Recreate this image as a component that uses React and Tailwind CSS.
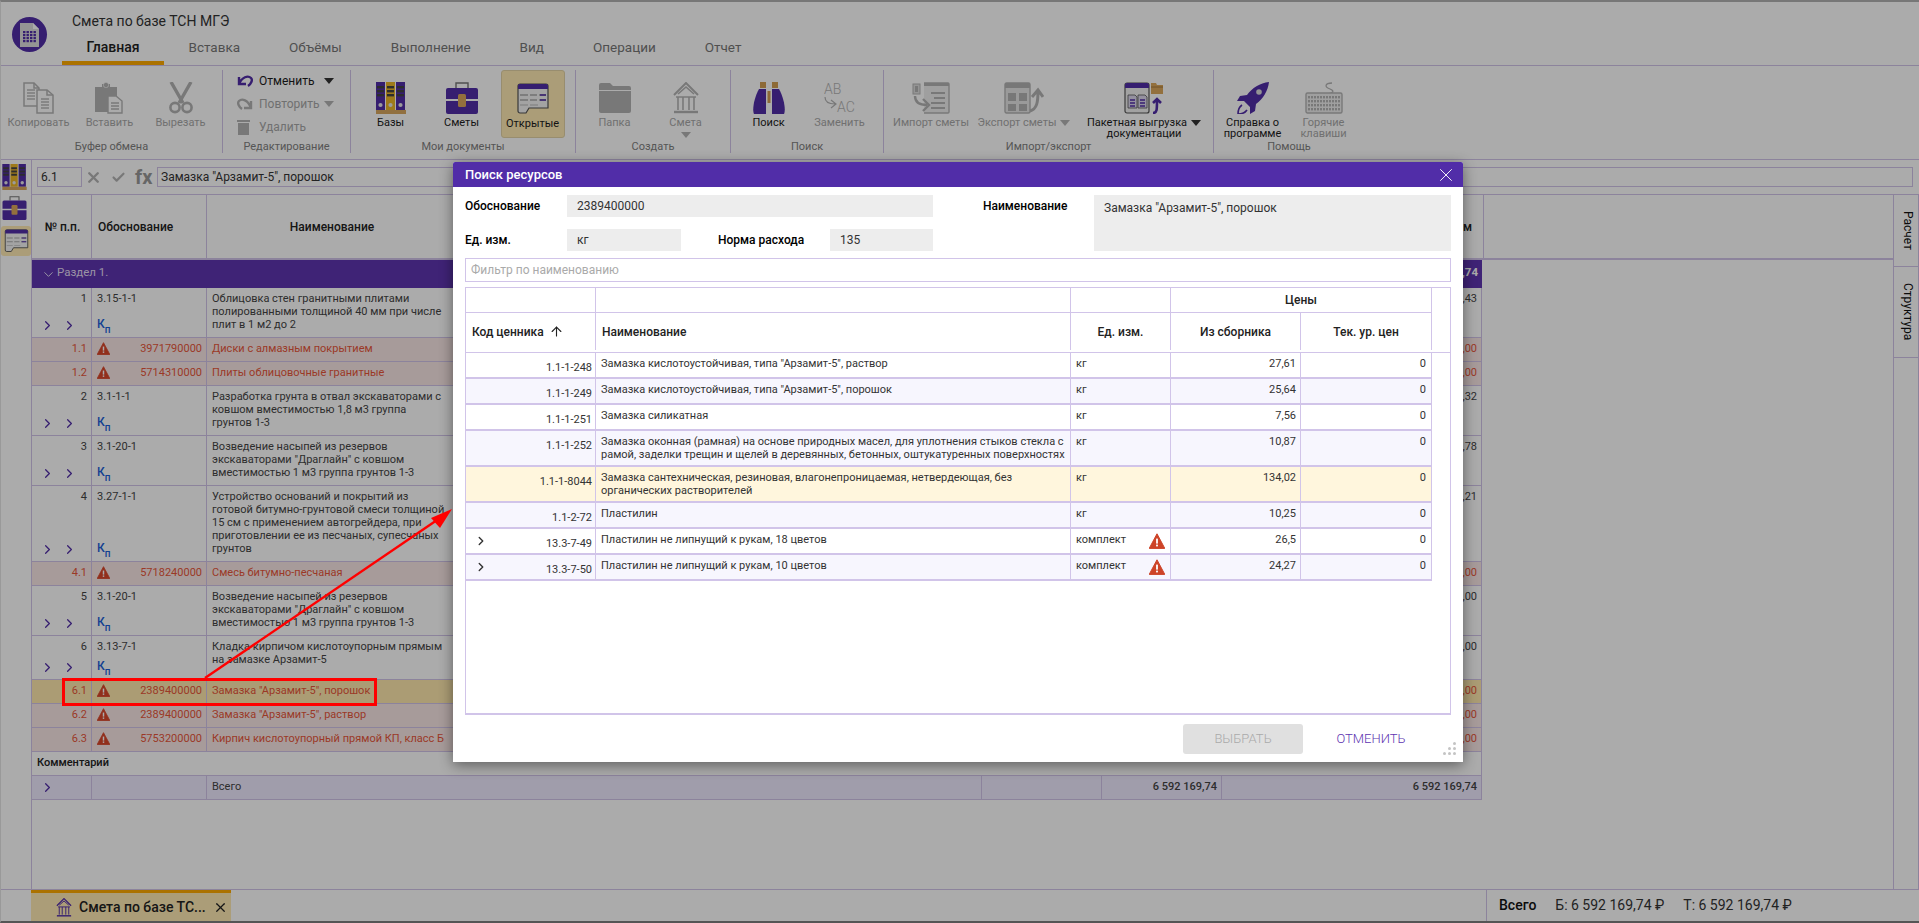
// App.jsx
import { X, Check, ChevronRight, ChevronDown, ArrowUp } from 'lucide-react';

const PURPLE = '#512da8';
const GRAY = '#b4b4b4';

function Caret({ color = '#333', className = '' }) {
  return (
    <svg width="10" height="6" viewBox="0 0 10 6" className={`shrink-0 ${className}`}>
      <path d="M0 0h10L5 6z" fill={color} />
    </svg>
  );
}

function WarnIcon({ size = 13, color = '#d9472b' }) {
  return (
    <svg width={size} height={size} viewBox="0 0 16 16" className="shrink-0">
      <path d="M8 .8 15.8 15.4H.2z" fill={color} stroke={color} strokeLinejoin="round" />
      <rect x="7.1" y="5.6" width="1.8" height="5" fill="#fff" />
      <rect x="7.1" y="11.6" width="1.8" height="1.8" fill="#fff" />
    </svg>
  );
}

function CopyIcon() {
  const lines = (x, y) => [0, 3, 6, 9].map((d) => <path key={d} d={`M${x} ${y + d}h8`} stroke={GRAY} strokeWidth="1.4" />);
  return (
    <svg width="32" height="32" viewBox="0 0 32 32" fill="none">
      <path d="M1 1h10l5 5v18H1z" fill="#fff" stroke={GRAY} strokeWidth="1.5" />
      <path d="M11 1v5h5" stroke={GRAY} strokeWidth="1.5" />
      <path d="M14 8h10l6 5v18H14z" fill="#fff" stroke={GRAY} strokeWidth="1.5" />
      <path d="M24 8v5h6" stroke={GRAY} strokeWidth="1.5" />
      {lines(4, 8)}
      {lines(18, 17)}
    </svg>
  );
}

function PasteIcon() {
  return (
    <svg width="32" height="32" viewBox="0 0 32 32" fill="none">
      <path d="M1 5h7V2h8v3h7v25H1z" fill={GRAY} />
      <rect x="9.5" y="0.5" width="5" height="5" rx="2" fill={GRAY} stroke="#fff" strokeWidth=".6" />
      <path d="M14 14h8l6 5v12H14z" fill="#fff" stroke={GRAY} strokeWidth="1.4" />
      <path d="M17 21h8M17 24h8M17 27h8" stroke={GRAY} strokeWidth="1.4" />
    </svg>
  );
}

function ScissorsIcon() {
  return (
    <svg width="32" height="32" viewBox="0 0 32 32" fill="none">
      <path d="M6 0l12 21M26 0 14 21" stroke={GRAY} strokeWidth="3.4" />
      <circle cx="10" cy="25.5" r="4.6" stroke={GRAY} strokeWidth="2.6" />
      <circle cx="22" cy="25.5" r="4.6" stroke={GRAY} strokeWidth="2.6" />
    </svg>
  );
}

function BindersIcon({ width = 30, height = 32 }) {
  const binder = (x, c) => (
    <g key={x}>
      <rect x={x} y="0" width="9" height="28" fill={c} />
      <rect x={x + 1} y="4" width="7" height="2.4" fill="#444" />
      <rect x={x + 1} y="8" width="7" height="2.4" fill="#444" />
      <rect x={x + 1} y="12" width="7" height="2.4" fill="#444" />
      <circle cx={x + 4.5} cy="23" r="2.1" fill="#e8e8e8" />
    </g>
  );
  return (
    <svg width={width} height={height} viewBox="0 0 30 32">
      {binder(0, PURPLE)}
      {binder(10, '#ecb628')}
      {binder(20, PURPLE)}
      <rect x="0" y="28" width="30" height="4" fill="#d8a860" />
    </svg>
  );
}

function CaseIcon({ width = 34, height = 32 }) {
  return (
    <svg width={width} height={height} viewBox="0 0 34 32" fill="none">
      <path d="M11 6V1h12v5" stroke="#777" strokeWidth="1.4" />
      <path d="M1 8a2 2 0 0 1 2-2h28a2 2 0 0 1 2 2v9H1z" fill={PURPLE} />
      <path d="M1 19h32v11a2 2 0 0 1-2 2H3a2 2 0 0 1-2-2z" fill={PURPLE} />
      <rect x="13" y="12" width="8" height="13" rx="1.5" fill="#dba75c" />
    </svg>
  );
}

function OpenIcon({ width = 32, height = 32 }) {
  return (
    <svg width={width} height={height} viewBox="0 0 32 32" fill="none">
      <path d="M1 3a2 2 0 0 1 2-2h26a2 2 0 0 1 2 2v22H12l-3 5H3a2 2 0 0 1-2-2z" fill="#f3f3f3" stroke="#555" strokeWidth="1.2" />
      <path d="M1 3a2 2 0 0 1 2-2h26a2 2 0 0 1 2 2v3H1z" fill={PURPLE} />
      <path d="M3 12h8M13 12h7M22 12h7M3 17h8M13 17h7M22 17h7" stroke="#aaa" strokeWidth="1.6" />
      <path d="M23 12h6M23 17h6" stroke={PURPLE} strokeWidth="1.6" />
      <path d="M3 22h8M13 22h8" stroke="#ccc" strokeWidth="1.6" />
    </svg>
  );
}

function FolderIcon() {
  return (
    <svg width="32" height="32" viewBox="0 0 32 32">
      <path d="M0 3a2 2 0 0 1 2-2h9l3 3h16a2 2 0 0 1 2 2v2H0z" fill={GRAY} />
      <path d="M0 9h32v20a2 2 0 0 1-2 2H2a2 2 0 0 1-2-2z" fill={GRAY} />
    </svg>
  );
}

function TempleIcon({ color = GRAY, width = 26, height = 32 }) {
  return (
    <svg width={width} height={height} viewBox="0 0 26 32" fill="none" stroke={color} strokeWidth="1.6">
      <path d="M1 13 13 1l12 12" strokeWidth="2" />
      <path d="M5 12 13 5l8 7M3 15h20M5 15v13M10 15v13M16 15v13M21 15v13" />
      <path d="M1 30h24" strokeWidth="2.4" />
    </svg>
  );
}

function BinocularsIcon() {
  return (
    <svg width="32" height="32" viewBox="0 0 32 32">
      <rect x="7" y="0" width="6" height="6" fill="#d39e52" />
      <rect x="19" y="0" width="6" height="6" fill="#d39e52" />
      <rect x="14.5" y="9" width="3" height="12" fill="#d39e52" />
      <path d="M6 7h7v25H1c-2-4 0-16 5-25z" fill={PURPLE} />
      <path d="M19 7h7c5 9 7 21 5 25H19z" fill={PURPLE} />
    </svg>
  );
}

function ReplaceIcon() {
  return (
    <svg width="32" height="32" viewBox="0 0 32 32" fill="none">
      <text x="0" y="12" fontSize="14" fill={GRAY} fontFamily="Roboto, sans-serif" fontWeight="300">AB</text>
      <text x="13" y="30" fontSize="14" fill={GRAY} fontFamily="Roboto, sans-serif" fontWeight="300">AC</text>
      <path d="M1 15c0 5 3 7 10 7M7 18l5 4-5 4" stroke={GRAY} strokeWidth="1.2" />
    </svg>
  );
}

function ImportIcon() {
  return (
    <svg width="38" height="32" viewBox="0 0 38 32" fill="none">
      <rect x="1" y="2" width="7" height="10" fill="#ddd" stroke={GRAY} />
      <rect x="3" y="4" width="3" height="6" fill={GRAY} />
      <path d="M12 1h24a1 1 0 0 1 1 1v28a1 1 0 0 1-1 1H12" fill="#eee" stroke={GRAY} strokeWidth="1.4" />
      <path d="M12 1h25v3H12z" fill={GRAY} />
      <path d="M19 11h14M22 16h11M19 21h14M19 26h14" stroke={GRAY} strokeWidth="2.2" />
      <path d="M3 14c0 6 4 9 12 9M11 17l6 6-6 6" stroke={GRAY} strokeWidth="2.4" />
    </svg>
  );
}

function ExportIcon() {
  return (
    <svg width="40" height="32" viewBox="0 0 40 32" fill="none">
      <rect x="1" y="1" width="25" height="30" rx="1.5" fill="#e6e6e6" stroke={GRAY} strokeWidth="1.4" />
      <path d="M1 1h25v5H1z" fill={GRAY} />
      <rect x="4" y="11" width="8" height="8" fill={GRAY} />
      <rect x="15" y="11" width="8" height="8" fill={GRAY} />
      <rect x="4" y="22" width="8" height="7" fill={GRAY} />
      <rect x="15" y="22" width="8" height="7" fill={GRAY} />
      <path d="M26 29c7-2 8-9 8-20M28 15l6-7 5 7" stroke={GRAY} strokeWidth="3" />
    </svg>
  );
}

function BatchIcon() {
  return (
    <svg width="40" height="32" viewBox="0 0 40 32" fill="none">
      <rect x="1" y="1" width="24" height="30" rx="2" fill="#f2f2f2" stroke="#555" strokeWidth="1.2" />
      <path d="M1 3a2 2 0 0 1 2-2h20a2 2 0 0 1 2 2v3H1z" fill={PURPLE} />
      <path d="M4 13h7l2 2v11H4zM14 13h7l2 2v11h-9z" fill="#ddd8ee" stroke="#555" strokeWidth=".8" />
      <path d="M6 18h5M6 21h5M6 24h5M16 18h5M16 21h5M16 24h5" stroke={PURPLE} strokeWidth="1.3" />
      <path d="M27 1h5l1 2h6v9H27z" fill="#dba75c" />
      <path d="M27 5h12" stroke="#a87a3a" />
      <path d="M29 31c4 0 4-3 4-13M29 21l4-4 4 4" stroke={PURPLE} strokeWidth="2.6" />
    </svg>
  );
}

function RocketIcon() {
  return (
    <svg width="32" height="32" viewBox="0 0 32 32">
      <path d="M32 0C23 1 15 6 10 13l-7 1-3 5 7 0 6 6 0 7 5-3 1-7C26 17 31 9 32 0z" fill={PURPLE} />
      <circle cx="22" cy="10" r="2.8" fill="#ddd" />
      <path d="M5 23c-3 2-4 5-4 9 3 0 7-1 9-4" fill="none" stroke={PURPLE} strokeWidth="1.6" />
    </svg>
  );
}

function KeyboardIcon() {
  const keys = [];
  for (let r = 0; r < 4; r++) {
    for (let c = 0; c < 11; c++) {
      keys.push(<rect key={`${r}-${c}`} x={3 + c * 3} y={14 + r * 4} width="2" height="2.4" fill={GRAY} />);
    }
  }
  return (
    <svg width="38" height="32" viewBox="0 0 38 32" fill="none">
      <path d="M27 1c-7 0-8 4-2 6 5 2 3 4-2 5" stroke={GRAY} strokeWidth="1.3" />
      <rect x="1" y="11" width="36" height="20" rx="1.5" fill="#eee" stroke={GRAY} strokeWidth="1.4" />
      {keys}
    </svg>
  );
}

function RibbonButton({ icon, label, active, disabled, width = 'w-[71px]', caret }) {
  return (
    <div className={`flex h-[68px] ${width} shrink-0 flex-col items-center`}>
      <div className={`flex h-[68px] flex-col items-center pt-[12px] ${active ? 'w-[64px] rounded-[3px] border border-[#e3d3a6] bg-[#ffeab4]' : 'w-full'}`}>
        <div className="flex h-[32px] items-end justify-center">{icon}</div>
        <div className={`mt-[3px] flex flex-col items-center whitespace-nowrap text-center text-[11px] leading-[11px] ${disabled ? 'text-[#a8a8a8]' : 'text-[#1c1c1c]'}`}>{label}</div>
        {caret}
      </div>
    </div>
  );
}

function RibbonGroup({ title, width, pad, last, children }) {
  return (
    <div className={`flex h-[83px] ${width} shrink-0 flex-col ${last ? '' : 'border-r border-[#d1c4e9]'}`}>
      <div className={`flex h-[71px] ${pad}`}>{children}</div>
      <div className="h-[12px] text-center text-[11px] leading-[12px] text-[#808080]">{title}</div>
    </div>
  );
}

function EditRow({ icon, label, disabled, caret }) {
  return (
    <div className="flex h-[21px] items-center">
      <div className="flex w-[22px] shrink-0">{icon}</div>
      <div className={`w-[65px] text-[12px] ${disabled ? 'text-[#a8a8a8]' : 'text-[#1c1c1c]'}`}>{label}</div>
      {caret && <Caret color={disabled ? GRAY : '#333'} />}
    </div>
  );
}

const tabs = ['Главная', 'Вставка', 'Объёмы', 'Выполнение', 'Вид', 'Операции', 'Отчет'];

const rows = [
  { no: '1', code: '3.15-1-1', name: 'Облицовка стен гранитными плитами полированными толщиной 40 мм при числе плит в 1 м2 до 2', sum: ',43', h: 'h-[50px]' },
  { no: '1.1', res: '3971790000', name: 'Диски с алмазным покрытием', sum: ',00', h: 'h-[24px]' },
  { no: '1.2', res: '5714310000', name: 'Плиты облицовочные гранитные', sum: ',00', h: 'h-[24px]' },
  { no: '2', code: '3.1-1-1', name: 'Разработка грунта в отвал экскаваторами с ковшом вместимостью 1,8 м3 группа грунтов 1-3', sum: ',32', h: 'h-[50px]' },
  { no: '3', code: '3.1-20-1', name: 'Возведение насыпей из резервов экскаваторами "Драглайн" с ковшом вместимостью 1 м3 группа грунтов 1-3', sum: ',78', h: 'h-[50px]' },
  { no: '4', code: '3.27-1-1', name: 'Устройство оснований и покрытий из готовой битумно-грунтовой смеси толщиной 15 см с применением автогрейдера, при приготовлении ее из песчаных, супесчаных грунтов', sum: ',21', h: 'h-[76px]' },
  { no: '4.1', res: '5718240000', name: 'Смесь битумно-песчаная', sum: ',00', h: 'h-[24px]' },
  { no: '5', code: '3.1-20-1', name: 'Возведение насыпей из резервов экскаваторами "Драглайн" с ковшом вместимостью 1 м3 группа грунтов 1-3', sum: ',00', h: 'h-[50px]' },
  { no: '6', code: '3.13-7-1', name: 'Кладка кирпичом кислотоупорным прямым на замазке Арзамит-5', sum: ',00', h: 'h-[44px]' },
  { no: '6.1', res: '2389400000', name: 'Замазка "Арзамит-5", порошок', sum: ',00', h: 'h-[24px]', selected: true },
  { no: '6.2', res: '2389400000', name: 'Замазка "Арзамит-5", раствор', sum: ',00', h: 'h-[24px]' },
  { no: '6.3', res: '5753200000', name: 'Кирпич кислотоупорный прямой КП, класс Б', sum: ',00', h: 'h-[24px]' },
];

const priceRows = [
  { code: '1.1-1-248', name: 'Замазка кислотоустойчивая, типа "Арзамит-5", раствор', unit: 'кг', price: '27,61', h: 'h-[26px]' },
  { code: '1.1-1-249', name: 'Замазка кислотоустойчивая, типа "Арзамит-5", порошок', unit: 'кг', price: '25,64', h: 'h-[26px]', alt: true },
  { code: '1.1-1-251', name: 'Замазка силикатная', unit: 'кг', price: '7,56', h: 'h-[26px]' },
  { code: '1.1-1-252', name: 'Замазка оконная (рамная) на основе природных масел, для уплотнения стыков стекла с рамой, заделки трещин и щелей в деревянных, бетонных, оштукатуренных поверхностях', unit: 'кг', price: '10,87', h: 'h-[36px]', alt: true },
  { code: '1.1-1-8044', name: 'Замазка сантехническая, резиновая, влагонепроницаемая, нетвердеющая, без органических растворителей', unit: 'кг', price: '134,02', h: 'h-[36px]', picked: true },
  { code: '1.1-2-72', name: 'Пластилин', unit: 'кг', price: '10,25', h: 'h-[26px]', alt: true },
  { code: '13.3-7-49', name: 'Пластилин не липнущий к рукам, 18 цветов', unit: 'комплект', price: '26,5', h: 'h-[26px]', warn: true },
  { code: '13.3-7-50', name: 'Пластилин не липнущий к рукам, 10 цветов', unit: 'комплект', price: '24,27', h: 'h-[26px]', alt: true, warn: true },
];

function EstimateRow({ row }) {
  const isRes = Boolean(row.res);
  const bg = row.selected ? 'bg-[#ffe9ad]' : isRes ? 'bg-[#f9e8e6]' : 'bg-white';
  const text = isRes ? 'text-[#e8563a]' : 'text-[#444]';
  return (
    <div className={`flex ${row.h} w-[1450px] border-b border-r border-[#d1c4e9] text-[11px] leading-[13px] ${bg} ${text}`}>
      <div className="relative w-[60px] shrink-0 border-r border-[#d1c4e9] pr-[4px] pt-[4px] text-right">
        {row.no}
        {!isRes && (
          <div className="absolute bottom-[4px] left-[8px] flex gap-[7px] text-[#512da8]">
            <ChevronRight size={15} strokeWidth={2} />
            <ChevronRight size={15} strokeWidth={2} />
          </div>
        )}
      </div>
      <div className={`relative w-[115px] shrink-0 border-r border-[#d1c4e9] pl-[5px] pt-[4px] ${isRes ? 'flex justify-between pr-[4px]' : ''}`}>
        {isRes ? (
          <>
            <WarnIcon />
            <span>{row.res}</span>
          </>
        ) : (
          <>
            {row.code}
            <div className="absolute bottom-[5px] left-[5px] text-[12px] font-medium leading-[13px] text-[#1e5fd9]">
              К<sub className="align-[-2px] text-[10px] leading-none">п</sub>
            </div>
          </>
        )}
      </div>
      <div className="w-[240px] shrink-0 pl-[5px] pr-[1px] pt-[4px]">{row.name}</div>
      <div className="ml-auto w-[260px] pr-[4px] pt-[4px] text-right">{row.sum}</div>
    </div>
  );
}

function PriceRow({ row }) {
  const bg = row.picked ? 'bg-[#fff6dd]' : row.alt ? 'bg-[#f7f6fe]' : 'bg-white';
  return (
    <div className={`grid ${row.h} w-[966px] grid-cols-[130px_475px_100px_130px_131px] border-b-2 border-[#d1c4e9] text-[11px] leading-[13px] text-[#333] ${bg}`}>
      <div className="relative border-r border-[#d1c4e9] pr-[3px] pt-[8px] text-right">
        {row.warn && <ChevronRight size={14} strokeWidth={2.4} className="absolute left-[8px] top-[5px] text-[#333]" />}
        {row.code}
      </div>
      <div className="border-r border-[#d1c4e9] pl-[5px] pt-[4px]">{row.name}</div>
      <div className="relative border-r border-[#d1c4e9] pl-[5px] pt-[4px]">
        {row.unit}
        {row.warn && <div className="absolute right-[5px] top-[4px]"><WarnIcon size={16} color="#cd4428" /></div>}
      </div>
      <div className="border-r border-[#d1c4e9] pr-[4px] pt-[4px] text-right">{row.price}</div>
      <div className="border-r border-[#d1c4e9] pr-[5px] pt-[4px] text-right">0</div>
    </div>
  );
}

function ResourceDialog() {
  return (
    <div className="absolute left-[452px] top-[160px] flex h-[600px] w-[1010px] flex-col rounded-t-[2px] bg-white shadow-[0_3px_14px_rgba(0,0,0,0.45)]">
      <div className="flex h-[25px] shrink-0 items-center justify-between rounded-t-[2px] bg-[#512da8] pl-[12px] pr-[6px] text-[13px] font-medium text-white">
        Поиск ресурсов
        <X size={22} strokeWidth={1} />
      </div>
      <div className="flex flex-col px-[12px] text-[12px] text-[#333]">
        <div className="mt-[8px] flex h-[56px]">
          <div className="flex w-[468px] flex-col justify-between">
            <div className="flex h-[22px] items-center">
              <div className="w-[102px] font-medium text-black">Обоснование</div>
              <div className="flex h-full flex-1 items-center bg-[#ededed] pl-[10px]">2389400000</div>
            </div>
            <div className="flex h-[22px] items-center">
              <div className="w-[102px] font-medium text-black">Ед. изм.</div>
              <div className="flex h-full w-[114px] items-center bg-[#ededed] pl-[10px]">кг</div>
              <div className="ml-[37px] w-[112px] font-medium text-black">Норма расхода</div>
              <div className="flex h-full flex-1 items-center bg-[#ededed] pl-[10px]">135</div>
            </div>
          </div>
          <div className="ml-[50px] flex h-[22px] w-[111px] items-center font-medium text-black">Наименование</div>
          <div className="flex-1 bg-[#ededed] pl-[10px] pt-[4px]">Замазка "Арзамит-5", порошок</div>
        </div>
        <div className="mt-[7px] flex h-[24px] items-center border border-[#d1c4e9] pl-[5px] text-[#aaa]">Фильтр по наименованию</div>
        <div className="mt-[5px] h-[428px] border-2 border-[#d1c4e9] border-l-[1px] border-r-[1px] border-t-[1px]">
          <div className="grid h-[25px] w-[966px] grid-cols-[130px_475px_100px_261px] border-b border-[#d1c4e9]">
            <div className="border-r border-[#d1c4e9]" />
            <div className="border-r border-[#d1c4e9]" />
            <div className="border-r border-[#d1c4e9]" />
            <div className="flex items-center justify-center border-r border-[#d1c4e9] font-medium text-[#222]">Цены</div>
          </div>
          <div className="grid h-[40px] grid-cols-[130px_475px_100px_130px_131px] border-b border-[#d1c4e9] pb-[2px] font-medium text-[#222]">
            <div className="flex items-center border-r border-[#d1c4e9] pl-[6px]">
              Код ценника
              <ArrowUp size={15} strokeWidth={1.8} className="ml-[5px]" />
            </div>
            <div className="flex items-center border-r border-[#d1c4e9] pl-[6px]">Наименование</div>
            <div className="flex items-center justify-center border-r border-[#d1c4e9]">Ед. изм.</div>
            <div className="flex items-center justify-center border-r border-[#d1c4e9]">Из сборника</div>
            <div className="flex items-center justify-center border-r border-[#d1c4e9]">Тек. ур. цен</div>
          </div>
          {priceRows.map((row) => (
            <PriceRow key={row.code} row={row} />
          ))}
        </div>
      </div>
      <div className="mt-[9px] flex justify-end gap-[8px] pr-[32px] text-[13px] font-light">
        <div className="flex h-[30px] w-[120px] items-center justify-center rounded-[3px] bg-[#e0e0e0] text-[#aaa]">ВЫБРАТЬ</div>
        <div className="flex h-[30px] w-[120px] items-center justify-center text-[#5e35b1]">ОТМЕНИТЬ</div>
      </div>
      <div className="absolute bottom-[7px] right-[7px] grid grid-cols-3 gap-[2px]">
        {[0, 0, 1, 0, 1, 1, 1, 1, 1].map((on, i) => (
          <span key={i} className={`h-[3px] w-[3px] rounded-full ${on ? 'bg-[#c4c4c4]' : ''}`} />
        ))}
      </div>
    </div>
  );
}

export default function App() {
  return (
    <div className="relative flex h-screen w-screen flex-col overflow-hidden border-l border-b-2 border-t-2 border-l-[#999] border-b-[#555] border-t-[#777] bg-white [font-family:Roboto,sans-serif]">
      {/* Title and tabs */}
      <div className="flex h-[64px] shrink-0 border-b border-[#d1c4e9]">
        <div className="ml-[11px] mt-[15px] flex h-[35px] w-[35px] items-center justify-center rounded-full bg-[#512da8]">
          <svg width="19" height="24" viewBox="0 0 19 24">
            <path d="M0 0h13l6 6v18H0z" fill="#ddd" />
            <path d="M13 0l6 6h-6z" fill="#fff" />
            {[8, 11, 14, 17].map((y) =>
              [3, 6.5, 10, 13.5].map((x) => <rect key={`${x}-${y}`} x={x} y={y} width="2.4" height="2.2" fill="#512da8" />),
            )}
          </svg>
        </div>
        <div className="ml-[15px] flex flex-col">
          <div className="h-[31px] pl-[10px] pt-[9px] text-[14px] leading-[20px] text-[#333]">Смета по базе ТСН МГЭ</div>
          <div className="flex h-[32px]">
            {tabs.map((tab, i) => (
              <div
                key={tab}
                className={`flex items-center px-[24.5px] pt-[1px] ${i === 0 ? 'border-b-[4px] border-[#ffab00] text-[14px] font-medium text-[#222]' : 'pb-[4px] text-[13.5px] text-[#777]'}`}
              >
                {tab}
              </div>
            ))}
          </div>
        </div>
      </div>

      {/* Ribbon */}
      <div className="flex h-[94px] shrink-0 border-b border-[#d1c4e9] pt-[4px]">
        <RibbonGroup title="Буфер обмена" width="w-[222px]" pad="pl-[2px]">
          <RibbonButton disabled icon={<CopyIcon />} label="Копировать" />
          <RibbonButton disabled icon={<PasteIcon />} label="Вставить" />
          <RibbonButton disabled icon={<ScissorsIcon />} label="Вырезать" />
        </RibbonGroup>
        <RibbonGroup title="Редактирование" width="w-[128px]" pad="flex-col gap-[2px] pl-[14px]">
          <EditRow
            caret
            label="Отменить"
            icon={
              <svg width="16" height="14" viewBox="0 0 16 14" fill="none" stroke={PURPLE} strokeWidth="2.4">
                <path d="M2 3v7h7M2 10C5 3 11 1 14 4c2 2 0 6-3 8" />
              </svg>
            }
          />
          <EditRow
            caret
            disabled
            label="Повторить"
            icon={
              <svg width="16" height="14" viewBox="0 0 16 14" fill="none" stroke={GRAY} strokeWidth="2.4">
                <path d="M14 4v7H7M14 11C11 3 5 1 2 4c-2 2 0 6 3 8" />
              </svg>
            }
          />
          <EditRow
            disabled
            label="Удалить"
            icon={
              <svg width="13" height="16" viewBox="0 0 13 16" fill={GRAY}>
                <path d="M0 1h13v2H0zM1 4h11v12H1z" />
              </svg>
            }
          />
        </RibbonGroup>
        <RibbonGroup title="Мои документы" width="w-[225px]" pad="pl-[4px]">
          <RibbonButton icon={<BindersIcon />} label="Базы" />
          <RibbonButton icon={<CaseIcon />} label="Сметы" />
          <RibbonButton active icon={<OpenIcon />} label="Открытые" />
        </RibbonGroup>
        <RibbonGroup title="Создать" width="w-[155px]" pad="pl-[3px]">
          <RibbonButton disabled icon={<FolderIcon />} label="Папка" />
          <RibbonButton disabled icon={<TempleIcon />} label="Смета" caret={<Caret color={GRAY} className="mt-[4px]" />} />
        </RibbonGroup>
        <RibbonGroup title="Поиск" width="w-[153px]" pad="pl-[2px]">
          <RibbonButton icon={<BinocularsIcon />} label="Поиск" />
          <RibbonButton disabled icon={<ReplaceIcon />} label="Заменить" />
        </RibbonGroup>
        <RibbonGroup title="Импорт/экспорт" width="w-[330px]" pad="pl-[8px]">
          <RibbonButton disabled width="w-[78px]" icon={<ImportIcon />} label="Импорт сметы" />
          <RibbonButton
            disabled
            width="w-[108px]"
            icon={<ExportIcon />}
            label={<span className="flex items-center gap-[4px]">Экспорт сметы<Caret color={GRAY} /></span>}
          />
          <RibbonButton
            width="w-[132px]"
            icon={<BatchIcon />}
            label={<><span className="flex items-center gap-[4px]">Пакетная выгрузка<Caret /></span>документации</>}
          />
        </RibbonGroup>
        <RibbonGroup last title="Помощь" width="w-[150px]" pad="pl-[3px]">
          <RibbonButton icon={<RocketIcon />} label={<>Справка о<br />программе</>} />
          <RibbonButton disabled icon={<KeyboardIcon />} label={<>Горячие<br />клавиши</>} />
        </RibbonGroup>
      </div>

      {/* Body */}
      <div className="flex min-h-0 flex-1">
        <div className="flex w-[31px] shrink-0 flex-col items-start gap-[6px] border-r border-[#d1c4e9] pt-[4px]">
          <div className="ml-[1px]"><BindersIcon width={25} height={26} /></div>
          <div className="ml-[0px]"><CaseIcon width={27} height={24} /></div>
          <div className="flex h-[30px] w-[30px] items-center justify-center rounded-[3px] bg-[#ffeab4]"><OpenIcon width={25} height={24} /></div>
        </div>

        <div className="flex min-w-0 flex-1 flex-col">
          {/* Formula bar */}
          <div className="flex h-[35px] shrink-0 items-center border-b border-[#d1c4e9] text-[12px] text-[#333]">
            <div className="ml-[5px] flex h-[20px] w-[45px] items-center border border-[#d1c4e9] pl-[3px]">6.1</div>
            <X size={17} strokeWidth={3.4} className="ml-[3px] text-[#b4b4b4]" />
            <Check size={15} strokeWidth={3.4} className="ml-[9px] text-[#b4b4b4]" />
            <div className="ml-[9px] w-[18px] text-[20px] font-bold leading-none text-[#999]">fx</div>
            <div className="ml-[4px] mr-[6px] flex h-[20px] flex-1 items-center border border-[#d1c4e9] pl-[3px]">Замазка "Арзамит-5", порошок</div>
          </div>

          <div className="flex min-h-0 flex-1">
            {/* Estimate table */}
            <div className="min-w-0 flex-1 border-r border-[#d1c4e9]">
              <div className="flex h-[65px] border-b-2 border-[#d1c4e9] text-[12px] font-medium text-[#222]">
                <div className="flex w-[60px] shrink-0 items-center justify-center border-r border-[#d1c4e9] pl-[2px]">№ п.п.</div>
                <div className="flex w-[115px] shrink-0 items-center border-r border-[#d1c4e9] pl-[6px]">Обоснование</div>
                <div className="flex w-[250px] shrink-0 items-center justify-center">Наименование</div>
                <div className="ml-[1025px] flex w-[1px] shrink-0 items-center justify-end">
                  <span className="mr-[11px]">м</span>
                </div>
                <div className="border-r border-[#d1c4e9]" />
              </div>
              <div className="flex h-[28px] w-[1450px] bg-[#5e35b1] text-[11.5px] text-[#e4dcf5]">
                <div className="flex items-center pl-[9px]">
                  <ChevronDown size={15} strokeWidth={1.6} />
                  <span className="ml-[1px] pb-[2px]">Раздел 1.</span>
                </div>
                <div className="ml-auto pr-[4px] pt-[4px] font-bold text-white">,74</div>
              </div>
              {rows.map((row) => (
                <EstimateRow key={row.no} row={row} />
              ))}
              <div className="flex h-[24px] w-[1450px] items-center border-b border-r border-[#d1c4e9] pl-[5px] text-[11px] font-medium text-[#222]">Комментарий</div>
              <div className="flex h-[24px] w-[1450px] border-b border-r border-[#d1c4e9] bg-[#efeaff] text-[11px] text-[#444]">
                <div className="flex w-[60px] shrink-0 items-center border-r border-[#d1c4e9] pl-[8px] text-[#512da8]">
                  <ChevronRight size={15} strokeWidth={2} />
                </div>
                <div className="w-[115px] shrink-0 border-r border-[#d1c4e9]" />
                <div className="flex w-[775px] shrink-0 items-center border-r border-[#d1c4e9] pl-[5px]">Всего</div>
                <div className="w-[120px] shrink-0 border-r border-[#d1c4e9]" />
                <div className="flex w-[120px] shrink-0 items-center justify-end border-r border-[#d1c4e9] pr-[4px] font-medium">6 592 169,74</div>
                <div className="flex flex-1 items-center justify-end pr-[4px] font-medium">6 592 169,74</div>
              </div>
            </div>
            {/* Side tabs */}
            <div className="flex w-[25px] shrink-0 flex-col border-r border-[#d1c4e9] text-[12px] text-[#111]">
              <div className="flex h-[72px] items-center justify-center border-b border-[#d1c4e9] pl-[3px] [writing-mode:vertical-rl]">Расчет</div>
              <div className="flex h-[91px] items-center justify-center border-b border-[#d1c4e9] pl-[3px] [writing-mode:vertical-rl]">Структура</div>
            </div>
          </div>
        </div>
      </div>

      {/* Status bar */}
      <div className="flex h-[32px] shrink-0 border-t border-[#d1c4e9]">
        <div className="ml-[30px] flex w-[200px] items-center border-t-[3px] border-[#ffab00] bg-[#ffeab4] pl-[24px] text-[14px] font-medium text-[#222]">
          <TempleIcon color="#512da8" width={18} height={19} />
          <span className="ml-[6px] w-[126px] whitespace-nowrap">Смета по базе ТС...</span>
          <X size={15} strokeWidth={2} className="ml-[8px]" />
        </div>
        <div className="ml-auto flex w-[433px] items-center gap-[19px] border-l border-[#d1c4e9] pl-[12px] text-[14px] text-[#333]">
          <span className="font-medium text-[#111]">Всего</span>
          <span>Б: 6 592 169,74 ₽</span>
          <span>Т: 6 592 169,74 ₽</span>
        </div>
      </div>

      {/* Modal backdrop */}
      <div className="absolute inset-0 bg-black/33" />
      <ResourceDialog />

      {/* Annotation drawn over the screenshot */}
      <svg className="pointer-events-none absolute -left-[1px] -top-[2px]" width="1919" height="923">
        <path d="M205 678 440 518" stroke="#f00" strokeWidth="2.4" />
        <path d="M452 509 431 518 440 528z" fill="#f00" />
      </svg>
      <div className="absolute left-[61px] top-[676px] h-[28px] w-[315px] border-[3px] border-[#f00]" />
    </div>
  );
}
